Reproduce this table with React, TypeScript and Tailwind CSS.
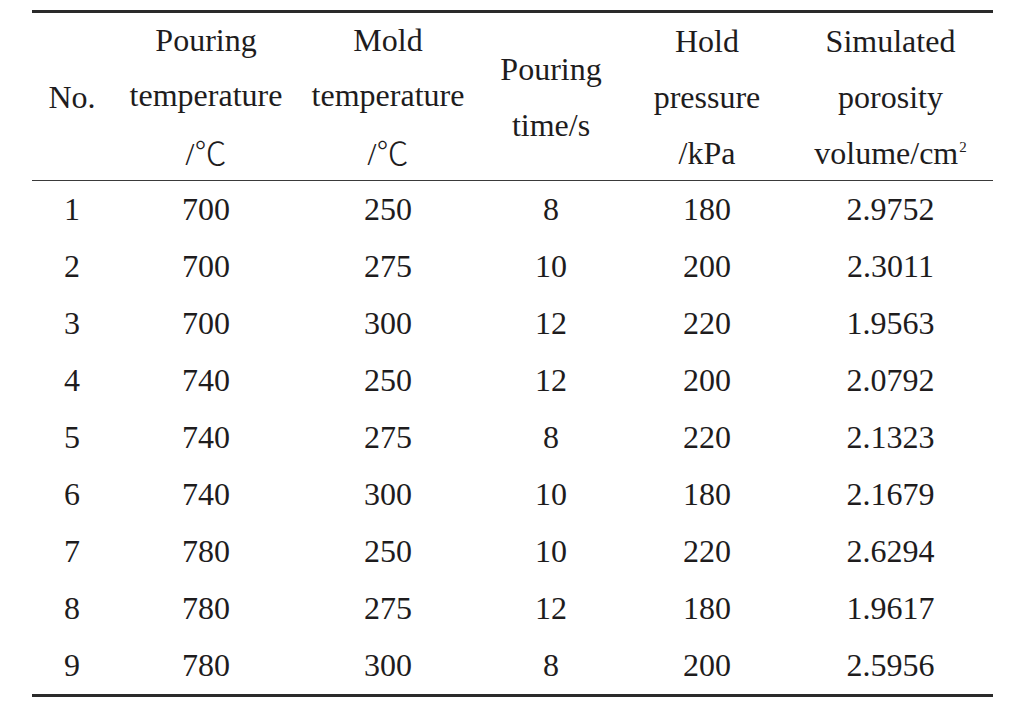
import React from "react";

const rows: [string, string, string, string, string, string][] = [
  ["1", "700", "250", "8", "180", "2.9752"],
  ["2", "700", "275", "10", "200", "2.3011"],
  ["3", "700", "300", "12", "220", "1.9563"],
  ["4", "740", "250", "12", "200", "2.0792"],
  ["5", "740", "275", "8", "220", "2.1323"],
  ["6", "740", "300", "10", "180", "2.1679"],
  ["7", "780", "250", "10", "220", "2.6294"],
  ["8", "780", "275", "12", "180", "1.9617"],
  ["9", "780", "300", "8", "200", "2.5956"],
];

const cols = "grid grid-cols-[80px_188px_176px_150px_162px_205px]";

function Cell({ children }: { children: React.ReactNode }) {
  return (
    <div className="flex flex-col items-center justify-center leading-[55.7px] whitespace-nowrap">
      {children}
    </div>
  );
}

function Celsius() {
  return (
    <span>
      /<span className="font-['Noto_Sans_CJK_SC',sans-serif] font-light">℃</span>
    </span>
  );
}

export default function App() {
  return (
    <div className="w-[1020px] h-[711px] bg-white text-[#1e1c1d] text-[32px] pt-[10px] pl-[32px] font-['Liberation_Serif',serif]">
      <div className="w-[961px]">
        <div className="h-[2.6px] bg-[#2a2a2a]" />
        <div className={`${cols} h-[167px]`}>
          <Cell>
            <span>No.</span>
          </Cell>
          <Cell>
            <span>Pouring</span>
            <span>temperature</span>
            <Celsius />
          </Cell>
          <Cell>
            <span>Mold</span>
            <span>temperature</span>
            <Celsius />
          </Cell>
          <Cell>
            <span>Pouring</span>
            <span>time/s</span>
          </Cell>
          <Cell>
            <span>Hold</span>
            <span>pressure</span>
            <span>/kPa</span>
          </Cell>
          <Cell>
            <span>Simulated</span>
            <span>porosity</span>
            <span>
              volume/cm<sup className="text-[15px] relative -top-[12px] ml-[1px]">2</sup>
            </span>
          </Cell>
        </div>
        <div className="h-px bg-[#3a3a3a]" />
        <div className="flex flex-col">
          {rows.map((r) => (
            <div key={r[0]} className={`${cols} h-[57.1px] leading-[57.1px]`}>
              {r.map((v, i) => (
                <div key={i} className="text-center">
                  {v}
                </div>
              ))}
            </div>
          ))}
        </div>
        <div className="h-[2.6px] bg-[#2a2a2a]" />
      </div>
    </div>
  );
}
